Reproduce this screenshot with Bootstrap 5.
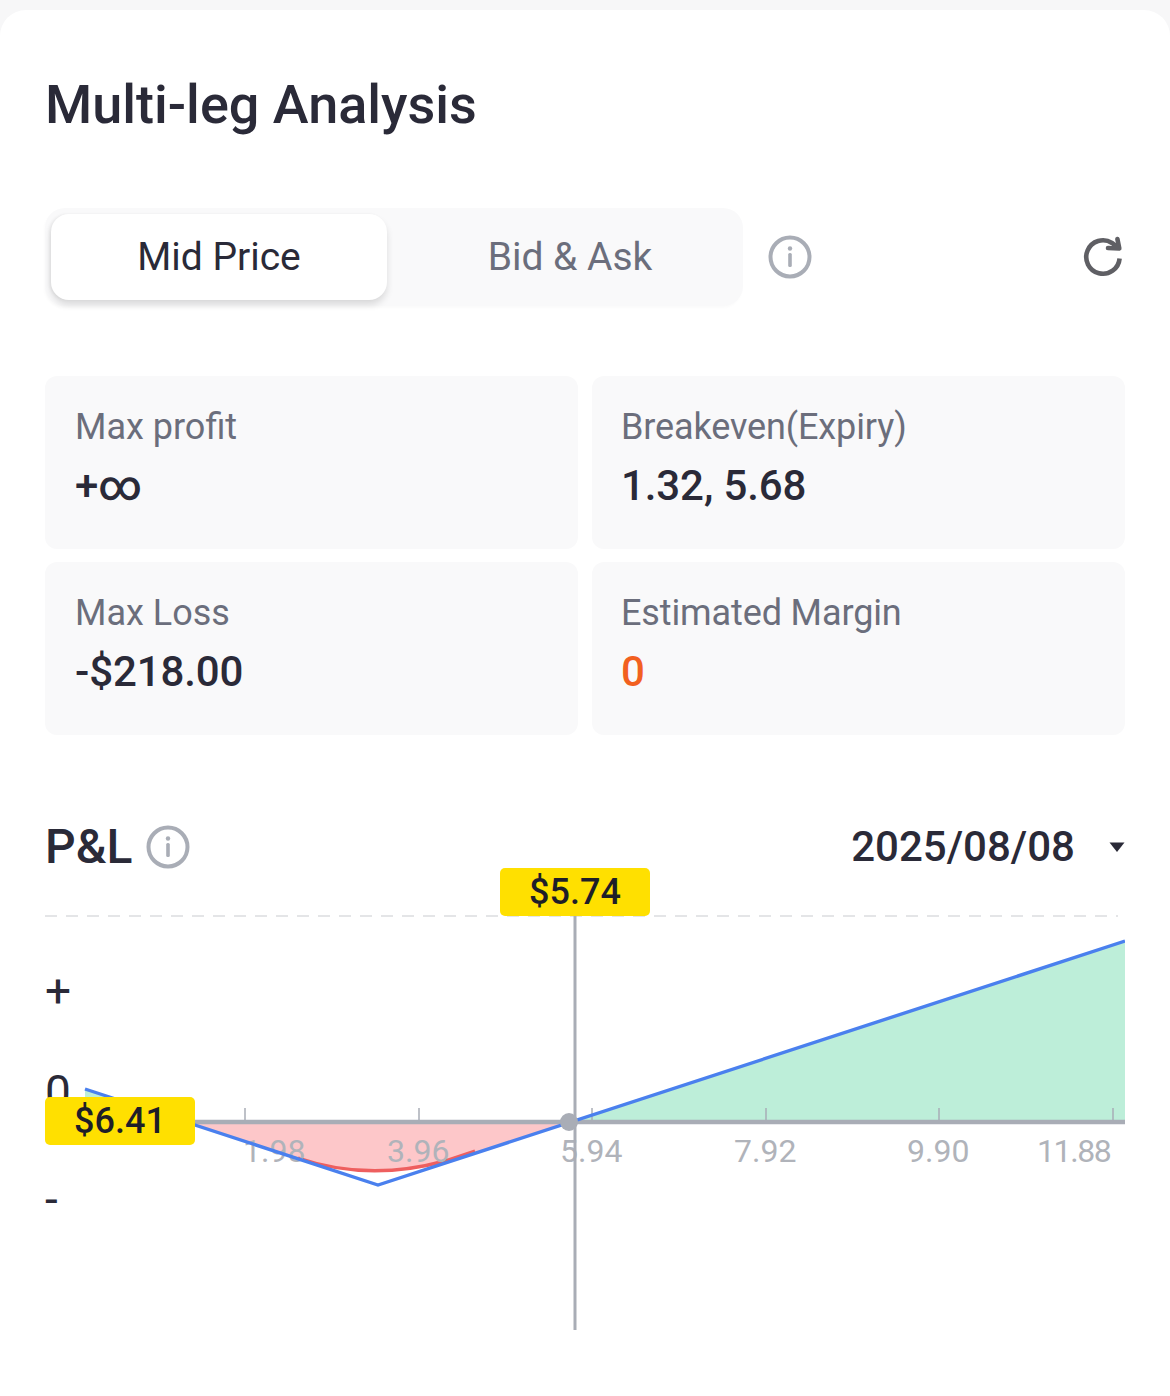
<!DOCTYPE html>
<html lang="en"><head><meta charset="utf-8"><title>Multi-leg Analysis</title>
<link href="https://cdn.jsdelivr.net/npm/bootstrap@5.3.0/dist/css/bootstrap.min.css" rel="stylesheet">
<style>
html,body{margin:0;height:100%;background:#f7f7f8;font-family:Roboto,"Liberation Sans",sans-serif;color:#2a2a38}
.sheet{margin-top:10px;height:1386px;background:#fff;border-radius:26px 26px 0 0;padding:0 45px;overflow:hidden}
.title{font-size:54px;font-weight:500;line-height:60px;margin:0;padding-top:65px;height:198px}
.tabs-bar{height:98px;width:698px;background:#f9f9fa;border-radius:20px;padding:6px;box-shadow:-1px 2px 3px rgba(0,0,0,.02)}
.tab-item{flex:0 0 336px;height:86px;font-size:39px;line-height:86px;text-align:center;color:#6b6e7c;border-radius:18px}
.tab-item.is-on{background:#fff;color:#2a2a38;box-shadow:0 5px 7px rgba(0,0,0,.12),-2px 0 3px rgba(0,0,0,.05)}
.tab-rest{flex:1 1 auto;padding-left:16px}
.tab-rest .tab-item{width:100%}
.ico-info{margin-left:25px;width:44px;height:44px}
.ico-refresh{margin-left:auto;width:44px;height:44px}
.tiles{--bs-gutter-x:14px;--bs-gutter-y:13px;margin-top:57px}
.tile{height:173px;background:#f9f9fa;border-radius:12px;padding:29px 30px}
.tile-right{padding-left:29px}
.tile-right .tile-label{letter-spacing:-.12px}
.tile-label{font-size:36px;line-height:44px;color:#6b6e7c}
.tile-value{font-size:42px;line-height:50px;font-weight:500;margin-top:12px;letter-spacing:-.1px}
.tile-value.warn{color:#f2601f}
.pl-head{margin-top:87px;height:50px}
.pl-title{font-size:48px;font-weight:500;line-height:50px}
.pl-gap{margin-left:14px}
.pl-date{font-size:42px;font-weight:500;line-height:50px}
.pl-caret{margin-left:34px}
.chart-box{position:relative;width:1080px;height:470px;margin-top:-4px}
.chart-box svg{display:block}
.price-tag{position:absolute;width:150px;height:48px;background:#ffe000;border-radius:5px;font-size:36px;font-weight:500;line-height:48px;text-align:center;color:#1e1e28}
.tag-top{left:455px;top:0}
.tag-left{left:0;top:229px}
.axis-num{font-size:32px;fill:#b0b3ba;font-family:Roboto,"Liberation Sans",sans-serif}
.axis-tight{letter-spacing:-1.4px}
.axis-sign{font-size:46px;fill:#2a2a38;font-family:Roboto,"Liberation Sans",sans-serif}
</style></head>
<body>
<div class="sheet">
 <h1 class="title">Multi-leg Analysis</h1>
 <div class="d-flex align-items-center">
  <div class="tabs-bar d-flex">
   <div class="tab-item is-on">Mid Price</div>
   <div class="tab-rest"><div class="tab-item">Bid &amp; Ask</div></div>
  </div>
  <svg class="ico-info" viewBox="0 0 44 44" fill="none"><circle cx="22" cy="22" r="19.5" stroke="#a9adb6" stroke-width="4"/><circle cx="22" cy="13.5" r="2.2" fill="#a9adb6"/><rect x="20.2" y="18" width="3.6" height="14" rx="1.5" fill="#a9adb6"/></svg>
  <svg class="ico-refresh" viewBox="0 0 44 44" fill="none"><path d="M38.6 23.5A16.7 16.7 0 1 1 31 8L37 12.5" stroke="#5f5f64" stroke-width="4.6"/><path d="M36.4 4 38.3 13.5 27 13" stroke="#5f5f64" stroke-width="4.6" stroke-linecap="round" stroke-linejoin="round"/></svg>
 </div>
 <div class="row tiles">
  <div class="col-6"><div class="tile"><div class="tile-label">Max profit</div><div class="tile-value">+∞</div></div></div>
  <div class="col-6"><div class="tile tile-right"><div class="tile-label">Breakeven(Expiry)</div><div class="tile-value">1.32, 5.68</div></div></div>
  <div class="col-6"><div class="tile"><div class="tile-label">Max Loss</div><div class="tile-value">-$218.00</div></div></div>
  <div class="col-6"><div class="tile tile-right"><div class="tile-label">Estimated Margin</div><div class="tile-value warn">0</div></div></div>
 </div>
 <div class="pl-head d-flex align-items-center">
  <span class="pl-title">P&amp;L</span>
  <svg class="pl-gap" width="44" height="44" viewBox="0 0 44 44" fill="none"><circle cx="22" cy="22" r="19.5" stroke="#a9adb6" stroke-width="4"/><circle cx="22" cy="13.5" r="2.2" fill="#a9adb6"/><rect x="20.2" y="18" width="3.6" height="14" rx="1.5" fill="#a9adb6"/></svg>
  <span class="pl-date ms-auto">2025/08/08</span>
  <svg class="pl-caret" width="16" height="12" viewBox="0 0 16 12"><path d="M0.5 1.5h15L8 11z" fill="#2a2a38"/></svg>
 </div>
 <div class="chart-box">
  <svg width="1080" height="470" viewBox="45 868 1080 470">
   <line x1="45" y1="916" x2="1118" y2="916" stroke="#dcdde0" stroke-width="1.5" stroke-dasharray="12 9"/>
   <text class="axis-sign" x="45" y="1007">+</text>
   <text class="axis-sign" x="45" y="1108">0</text>
   <text class="axis-sign" x="45" y="1215">-</text>
   <path d="M571 1122 1125 941V1122Z" fill="#bdeed9"/>
   <path d="M85 1089 186 1122H85Z" fill="#bdeed9"/>
   <path d="M186 1122 298 1159Q368 1182 445 1163L571 1122Z" fill="#fdc7c9"/>
   <path d="M298 1158Q368 1182 445 1161L475 1151" fill="none" stroke="#ee5f5f" stroke-width="3.4"/>
   <g stroke="#a9adb6" stroke-width="1.5"><line x1="245" y1="1108" x2="245" y2="1122"/><line x1="419" y1="1108" x2="419" y2="1122"/><line x1="592" y1="1108" x2="592" y2="1122"/><line x1="766" y1="1108" x2="766" y2="1122"/><line x1="939" y1="1108" x2="939" y2="1122"/><line x1="1113" y1="1108" x2="1113" y2="1122"/></g>
   <line x1="85" y1="1122" x2="1125" y2="1122" stroke="#a9adb6" stroke-width="4.5"/>
   <text class="axis-num" x="243" y="1162">1.98</text>
   <text class="axis-num" x="387" y="1162">3.96</text>
   <text class="axis-num" x="560" y="1162">5.94</text>
   <text class="axis-num" x="734" y="1162">7.92</text>
   <text class="axis-num" x="907" y="1162">9.90</text>
   <text class="axis-num axis-tight" x="1037" y="1162">11.88</text>
   <path d="M85 1089 378 1185 1125 941" fill="none" stroke="#4a80ee" stroke-width="3.4"/>
   <line x1="575" y1="916" x2="575" y2="1330" stroke="#a9adb6" stroke-width="3"/>
   <circle cx="569" cy="1122" r="9" fill="#a9adb6"/>
  </svg>
  <span class="price-tag tag-top">$5.74</span>
  <span class="price-tag tag-left">$6.41</span>
 </div>
</div>
<script src="https://cdn.jsdelivr.net/npm/bootstrap@5.3.0/dist/js/bootstrap.bundle.min.js"></script>
</body></html>
